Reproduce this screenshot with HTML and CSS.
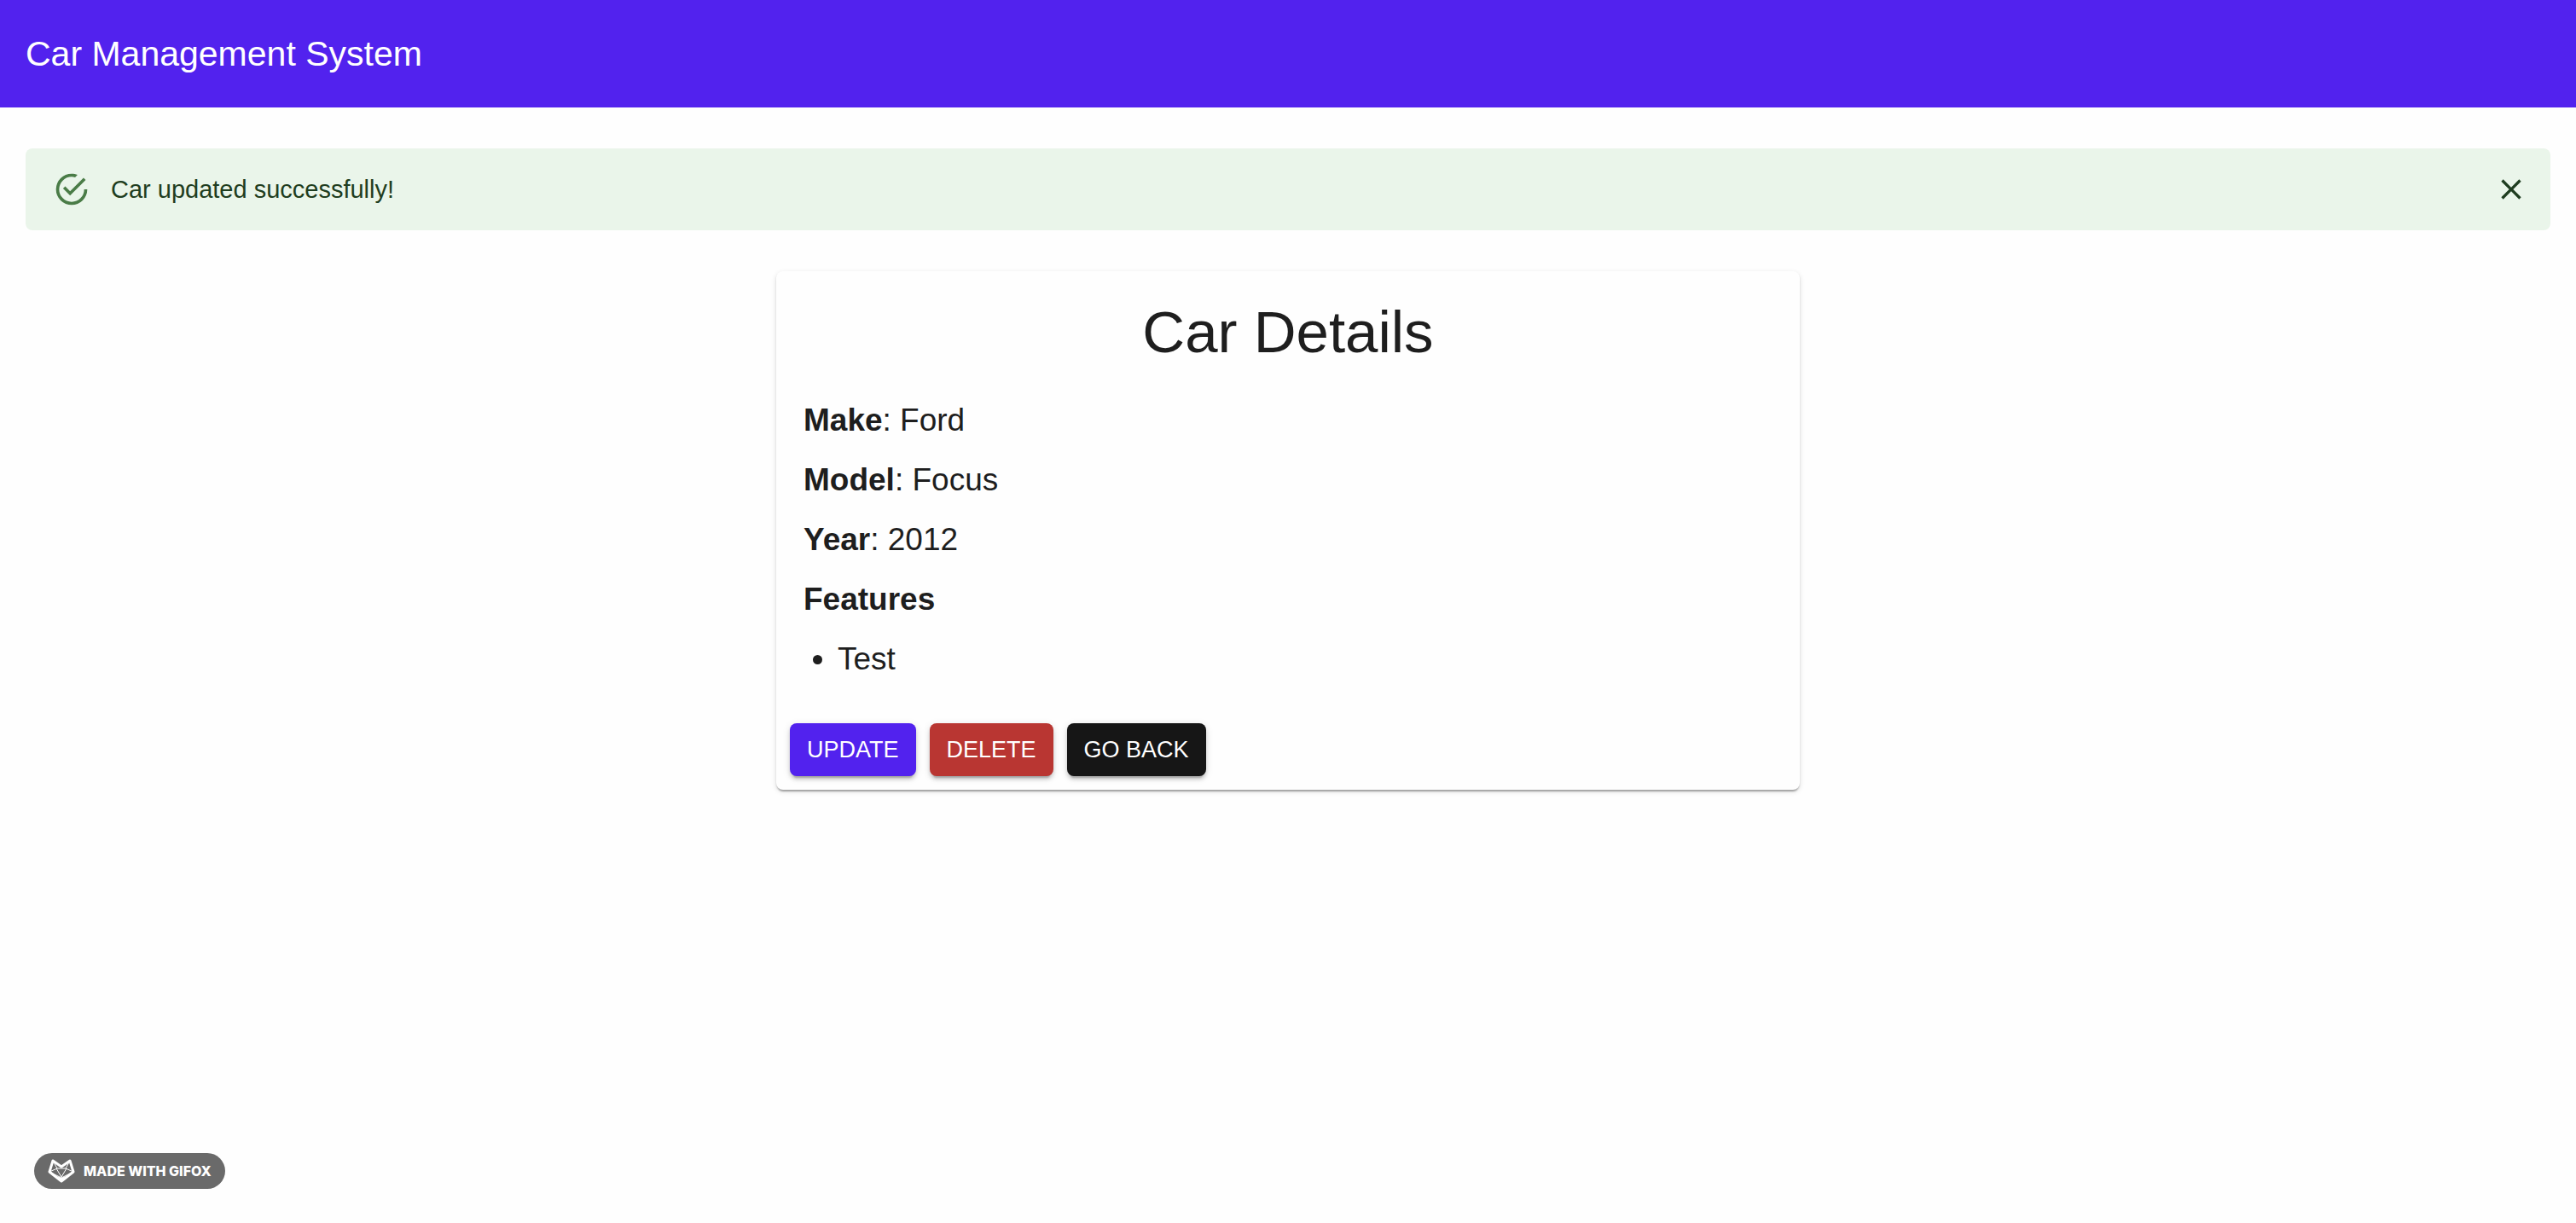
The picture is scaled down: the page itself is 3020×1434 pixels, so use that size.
FILE: index.html
```html
<!DOCTYPE html>
<html lang="en">
<head>
<meta charset="utf-8">
<meta name="viewport" content="width=device-width, initial-scale=1">
<title>Car Management System</title>
<link rel="stylesheet" href="styles.css">
</head>
<body>
<header class="app-bar">
  <span class="app-title">Car Management System</span>
</header>
<main class="content">
  <div class="alert" role="status">
    <svg class="alert-icon" viewBox="0 0 24 24" aria-hidden="true"><path d="M20,12A8,8 0 0,1 12,20A8,8 0 0,1 4,12A8,8 0 0,1 12,4C12.76,4 13.5,4.11 14.2,4.31L15.77,2.74C14.61,2.26 13.34,2 12,2A10,10 0 0,0 2,12A10,10 0 0,0 12,22A10,10 0 0,0 22,12M7.91,10.08L6.5,11.5L11,16L21,6L19.59,4.58L11,13.17L7.91,10.08Z"/></svg>
    <p class="alert-text">Car updated successfully!</p>
    <button class="alert-close" type="button" aria-label="Close">
      <svg class="close-icon" viewBox="0 0 24 24" aria-hidden="true"><path d="M19 6.41L17.59 5 12 10.59 6.41 5 5 6.41 10.59 12 5 17.59 6.41 19 12 13.41 17.59 19 19 17.59 13.41 12z"/></svg>
    </button>
  </div>
  <section class="card">
    <div class="card-body">
      <h1 class="card-title">Car Details</h1>
      <p class="detail"><strong>Make</strong>: Ford</p>
      <p class="detail"><strong>Model</strong>: Focus</p>
      <p class="detail"><strong>Year</strong>: 2012</p>
      <p class="detail"><strong>Features</strong></p>
      <ul class="features">
        <li>Test</li>
      </ul>
    </div>
    <div class="card-actions">
      <button class="btn btn-primary" type="button">UPDATE</button>
      <button class="btn btn-danger" type="button">DELETE</button>
      <button class="btn btn-dark" type="button">GO BACK</button>
    </div>
  </section>
</main>
<div class="badge">
  <svg class="badge-icon" viewBox="0 0 32 28" aria-hidden="true">
    <path class="fox-outline" d="M6 2L16 9L26 2L30 15L16 26L2 15Z"/>
    <path class="fox-facets" d="M6 2L11 11L2 15M26 2L21 11L30 15M10 11H22L16 21ZM2 15L16 22L30 15"/>
    <path class="fox-nose" d="M11 20L16 22L21 20L16 27Z"/>
  </svg>
  <span>MADE WITH GIFOX</span>
</div>
</body>
</html>
```
FILE: styles.css
```css
* {
  box-sizing: border-box;
}

body {
  margin: 0;
  min-height: 100vh;
  background: #fefefe;
  color: #1e1e1e;
  font-family: "Liberation Sans", Arial, Helvetica, sans-serif;
}

.app-bar {
  display: flex;
  align-items: center;
  height: 126px;
  padding: 0 30px;
  background: #5222ee;
  color: #fff;
}

.app-title {
  font-size: 41px;
  line-height: 48px;
}

.content {
  display: flex;
  flex-direction: column;
  gap: 48px;
  padding: 48px 30px;
}

.alert {
  display: flex;
  align-items: center;
  min-height: 96px;
  padding: 0 22px 0 32px;
  border-radius: 8px;
  background: #eaf5ea;
  color: #1f3d20;
}

.alert-icon {
  width: 44px;
  height: 44px;
  margin-right: 24px;
  fill: #4a7c47;
}

.alert-text {
  flex: 1;
  margin: 0;
  font-size: 29px;
  line-height: 40px;
}

.alert-close {
  display: flex;
  padding: 4px;
  border: 0;
  background: none;
  color: inherit;
  cursor: pointer;
}

.close-icon {
  width: 40px;
  height: 40px;
  fill: currentColor;
}

.card {
  width: 100%;
  max-width: 1200px;
  margin: 0 auto;
  border-radius: 8px;
  background: #fefefe;
  box-shadow: 0 4px 2px -2px rgba(0, 0, 0, 0.2), 0 2px 2px rgba(0, 0, 0, 0.14), 0 2px 6px rgba(0, 0, 0, 0.12);
}

.card-body {
  padding: 32px;
}

.card-title {
  margin: 0 0 36px;
  font-size: 69px;
  font-weight: 400;
  line-height: 80px;
  text-align: center;
}

.detail,
.features {
  margin: 0 0 16px;
  font-size: 37px;
  line-height: 54px;
}

.features {
  margin: 0;
  padding-left: 40px;
}

.card-actions {
  display: flex;
  gap: 16px;
  padding: 16px;
}

.btn {
  height: 62px;
  padding: 0 20px;
  border: 0;
  border-radius: 8px;
  color: #fff;
  font-family: inherit;
  font-size: 27px;
  line-height: 44px;
  box-shadow: 0 6px 2px -4px rgba(0, 0, 0, 0.2), 0 4px 4px rgba(0, 0, 0, 0.14), 0 2px 10px rgba(0, 0, 0, 0.12);
  cursor: pointer;
}

.btn-primary {
  background: #5222ee;
}

.btn-danger {
  background: #b93632;
}

.btn-dark {
  background: #161616;
}

.badge {
  position: fixed;
  left: 40px;
  bottom: 40px;
  display: flex;
  align-items: center;
  gap: 10px;
  height: 42px;
  padding: 0 16px;
  border-radius: 21px;
  background: #6a6a6a;
  color: #fff;
  font-family: Inter, sans-serif;
  font-size: 16px;
  font-weight: 800;
  line-height: 20px;
}

.badge-icon {
  width: 32px;
  height: 28px;
  fill: none;
  stroke: currentColor;
  stroke-linejoin: round;
}

.fox-outline {
  stroke-width: 3;
}

.fox-facets {
  stroke-width: 1;
}

.fox-nose {
  fill: currentColor;
  stroke: none;
}
```
